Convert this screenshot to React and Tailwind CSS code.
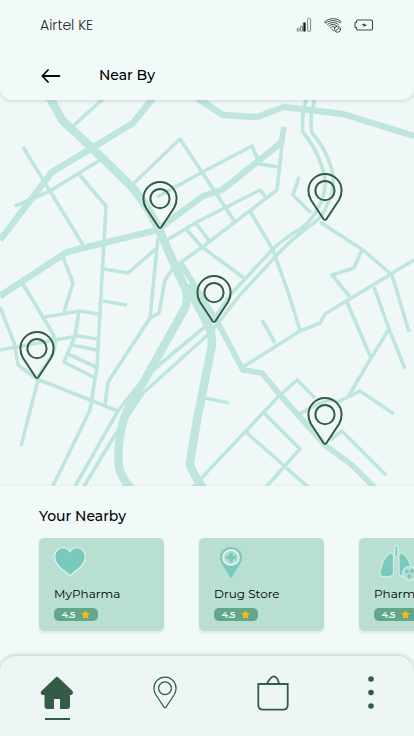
import React from "react";

const MAP_W = 414;
const MAP_H = 386;

const wideRoads = [
  "M49 96 62 120 92 148 132 187 Q150 209 160 232 L185 288 Q189 298 185 308 L143 383 Q127 408 123 422 Q117 445 119 467 Q121 478 132 490",
  "M187 285 207 323 Q214 335 211 350 L197 420 190 463 Q190 469 204 490",
];

const mainRoads = [
  "M0 240 52 172 92 148 133 123 153 98",
  "M0 296 67 252 157 230 203 196 222 190 282 142",
  "M197 98 223 115 257 117 284 107 343 114 414 136",
];

const mediumRoads = [
  "M180 262 218 323 243 370 262 373 280 395 325 445 352 465 375 488",
  "M284 127 281 145",
];

const streets = [
  "M72 127 103 99",
  "M23 147 83 245",
  "M15 206 50 191 100 160",
  "M78 173 106 206 101 295 97 367 90 410 52 488",
  "M104 269 128 273 158 247",
  "M63 257 73 283 64 312",
  "M23 284 53 334Q57 342 53 354L37 378",
  "M0 307 15 345 18 365 37 379 118 411",
  "M38 380 21 446",
  "M0 350 55 340 78 336 98 339",
  "M45 317 79 311 98 314",
  "M79 311 75 336 64 362 95 378",
  "M72 345 97 350",
  "M68 354 96 367",
  "M103 301 127 305",
  "M132 185 180 139 235 222",
  "M157 197 210 168 252 146 260 164 278 167",
  "M284 127 277 190 205 245 173 268 165 280 159 313 150 318 108 382 105 405",
  "M158 238 150 318",
  "M167 240 197 222 260 190 265 196",
  "M185 228 202 247 244 278",
  "M195 222 210 242",
  "M250 211 273 250 288 292 300 330",
  "M307 98 Q301 112 303 132 Q316 148 322 167 Q330 188 318 208 Q312 220 302 228 Q284 238 272 250 L232 293 213 320 153 370 132 393 118 411 74 488",
  "M315 98 Q309 118 312 133 Q326 149 331 167 Q337 187 327 205 Q323 216 315 222 Q290 240 275 257 L240 295 210 333 143 393 110 443 83 488",
  "M299 177 293 195 311 213",
  "M320 222 363 250 392 275 398 295 409 332",
  "M362 250 354 268 332 275 350 297",
  "M414 260 353 297 325 314 320 323 300 331 243 367",
  "M374 287 389 329 405 369",
  "M389 329 371 358 348 397",
  "M347 302 371 358",
  "M262 320 275 343",
  "M205 398 229 403",
  "M192 488 278 397 297 380 315 398",
  "M300 414 Q328 396 338 402 L360 391 394 414",
  "M330 440 342 431 386 475",
  "M264 413 300 449 265 488",
  "M246 432 309 488",
];

const pins = [
  { name: "Pharmacy near the junction", x: 160, y: 129 },
  { name: "Pharmacy on the east road", x: 325, y: 121 },
  { name: "Pharmacy in the centre", x: 214, y: 223 },
  { name: "Pharmacy on the west side", x: 37, y: 279 },
  { name: "Pharmacy to the south", x: 325, y: 345 },
];

function SignalIcon() {
  return (
    <svg width="16" height="16" viewBox="0 0 16 16" fill="none" stroke="#5b6463" strokeWidth="0.8" aria-hidden="true">
      <rect x="1.2" y="11.2" width="2" height="3" rx="0.6" />
      <rect x="4.5" y="9" width="2" height="5.2" rx="0.6" />
      <rect x="7.4" y="5.6" width="2" height="8.8" rx="0.6" fill="#111" />
      <rect x="11.6" y="1.4" width="3" height="13" rx="1" />
    </svg>
  );
}

function WifiIcon() {
  return (
    <svg width="18" height="16" viewBox="0 0 18 16" fill="none" stroke="#303837" strokeWidth="0.9" strokeLinecap="round" aria-hidden="true">
      <path d="M1 4.6C5.5 0.7 12.500 0.700 17 4.600L15.800 6C12 2.800 6 2.800 2.200 6Z" />
      <path d="M3.600 7.600C7 4.800 11 4.800 14.400 7.600M5 9C7.500 7 10.500 7 13 9" />
      <path d="M6.500 10.700C8 9.300 9.500 9.300 11 10.300M8 12.200 9.500 13.600" />
      <circle cx="13.500" cy="12.300" r="3" />
      <path d="M12 13.500 15 11.100" />
    </svg>
  );
}

function BatteryIcon() {
  return (
    <svg width="20" height="12" viewBox="0 0 20 12" fill="none" stroke="#424a49" strokeWidth="1.1" aria-hidden="true">
      <path d="M4 1H17Q18.500 1 18.500 2.500V9.500Q18.500 11 17 11H4Q2.500 11 2.500 9.500V8.500H1.500Q1 8.500 1 8V4Q1 3.500 1.500 3.500H2.500V2.500Q2.500 1 4 1Z" />
      <path d="M10.500 4.200 7.200 6.300H10L9.500 8 13.300 5.700H10.500Z" fill="#222" stroke="none" />
    </svg>
  );
}

function PinIcon({ className, strokeWidth }) {
  return (
    <svg viewBox="0 0 36 48" fill="none" stroke="#335b45" strokeWidth={strokeWidth} strokeLinejoin="round" className={className} aria-hidden="true">
      <path d="M18 1A16.600 16.600 0 0 0 1.400 17.600Q1.400 22.500 4 27L16.500 46Q18 48 19.500 46L32 27Q34.600 22.500 34.600 17.600A16.600 16.600 0 0 0 18 1Z" />
      <circle cx="18" cy="17.600" r="9.600" />
    </svg>
  );
}

function HeartIcon() {
  return (
    <svg width="32" height="30" viewBox="0 0 32 30" aria-hidden="true">
      <path d="M16 4.700C14.300 1.800 12 .700 9.500 .700C4.500 .700 .700 4.500 .700 9.500C.700 16 5 20 9.500 23.500Q13 26 16 29Q19 26 22.500 23.500C27 20 31.300 16 31.300 9.500C31.300 4.500 27.500 .700 22.500 .700C20 .700 17.700 1.800 16 4.700Z" fill="#7ac9bd" stroke="#e6f6f2" strokeWidth="1.100" />
    </svg>
  );
}

function StoreIcon() {
  return (
    <svg width="32" height="32" viewBox="0 0 32 32" className="ml-px" aria-hidden="true">
      <path d="M16 0C9.500 0 5 4.500 5 10.500C5 15 8 19 16 31.500C24 19 27 15 27 10.500C27 4.500 22.500 0 16 0Z" fill="#7ac9bd" />
      <ellipse cx="16" cy="10.500" rx="8.200" ry="7.500" fill="#b5ded5" stroke="#eef9f6" strokeWidth="1.300" />
      <path d="M14.200 5.800H17.800V8.800H21V12.200H17.800V15.200H14.200V12.200H11V8.800H14.200Z" fill="#7ac9bd" />
    </svg>
  );
}

function LungsIcon() {
  return (
    <svg width="40" height="36" viewBox="0 0 40 36" className="ml-1 max-w-none" aria-hidden="true">
      <g fill="#7ac9bd" stroke="#d3eee6" strokeWidth="1.200" strokeLinejoin="round">
        <path d="M17 0.600H19.800V12H17Z" />
        <path d="M13.500 8C10 8 6 14 4 20Q1.500 28 2.200 30Q2.800 31.800 6 31.800Q15.500 32 15.500 28V11Q15.500 8 13.500 8Z" />
        <path d="M23 8C26.500 8 30.500 14 32.500 20Q35 28 34.300 30Q33.700 31.800 30.500 31.800Q21 32 21 28V11Q21 8 23 8Z" />
        <circle cx="31.500" cy="28.500" r="7" fill="#b5ded5" />
      </g>
      <g fill="#7ac9bd">
        <circle cx="29" cy="26.500" r="1.900" />
        <circle cx="34" cy="26" r="1.900" />
        <circle cx="31.500" cy="31.500" r="1.900" />
      </g>
    </svg>
  );
}

function StarIcon() {
  return (
    <svg width="9" height="9" viewBox="0 0 24 24" fill="#fbbc16" aria-hidden="true">
      <path d="M12 0 15.500 8 24 9 17.800 14.700 19.500 23.500 12 19 4.500 23.500 6.200 14.700 0 9 8.500 8Z" />
    </svg>
  );
}

const stores = [
  { name: "MyPharma", rating: "4.5", icon: <HeartIcon />, pad: "pt-[9px]" },
  { name: "Drug Store", rating: "4.5", icon: <StoreIcon />, pad: "pt-[9px]" },
  { name: "Pharmacy", rating: "4.5", icon: <LungsIcon />, pad: "pt-[7px]" },
];

function StoreCard({ store }) {
  return (
    <li className="h-[93px] w-[125px] shrink-0 rounded-[5px] bg-[#b9dfd2] px-[15px] shadow-[0_2px_3px_rgba(0,0,0,0.08)]">
      <div className={`h-12 ${store.pad}`}>{store.icon}</div>
      <h3 className="whitespace-nowrap text-xs leading-4 text-black">{store.name}</h3>
      <p className="mt-[6px] flex h-[13px] w-11 items-center justify-center gap-[6px] rounded-[5px] bg-[#62a68c] text-[9px] font-semibold leading-none text-white">
        {store.rating}
        <StarIcon />
      </p>
    </li>
  );
}

export default function App() {
  return (
    <div className="flex min-h-screen flex-col bg-[#eff8f7] font-['Montserrat','Inter',sans-serif]">
      <header className="relative z-10 h-[100px] rounded-b-xl bg-[#f1faf9] px-10 shadow-[0_1px_4px_rgba(0,0,0,0.14)]">
        <div className="flex h-[50px] items-center justify-between">
          <span className="font-['Poppins','Inter',sans-serif] text-sm font-light text-[#1f2927]">Airtel KE</span>
          <div className="flex items-center gap-3">
            <SignalIcon />
            <WifiIcon />
            <BatteryIcon />
          </div>
        </div>
        <div className="flex h-[50px] items-center gap-9">
          <button type="button" aria-label="Back" className="flex h-6 w-[23px] items-center">
            <svg width="21" height="16" viewBox="0 0 21 16" fill="none" stroke="#050a08" strokeWidth="1.800" strokeLinecap="round" strokeLinejoin="round" aria-hidden="true">
              <path d="M19.500 9H2.500M8 3 2.300 9 8 15" />
            </svg>
          </button>
          <h1 className="text-sm font-medium text-black">Near By</h1>
        </div>
      </header>

      <main className="flex flex-1 flex-col">
        <section aria-label="Map" className="relative min-h-[386px] flex-1 overflow-hidden">
          <svg viewBox="0 100 414 386" preserveAspectRatio="none" className="absolute inset-0 h-full w-full" fill="none" stroke="#bfe6de" strokeLinejoin="round" aria-hidden="true">
            <g strokeWidth="8.500">{wideRoads.map((d) => <path key={d} d={d} />)}</g>
            <g strokeWidth="6.500">{mainRoads.map((d) => <path key={d} d={d} />)}</g>
            <g strokeWidth="5.800">{mediumRoads.map((d) => <path key={d} d={d} />)}</g>
            <g strokeWidth="3.600">{streets.map((d) => <path key={d} d={d} />)}</g>
          </svg>
          {pins.map((pin) => (
            <button
              key={pin.name}
              type="button"
              aria-label={pin.name}
              className="absolute -translate-x-1/2 -translate-y-full"
              style={{ left: `${(pin.x / MAP_W) * 100}%`, top: `${(pin.y / MAP_H) * 100}%` }}
            >
              <PinIcon className="block h-12 w-9" strokeWidth="2" />
            </button>
          ))}
        </section>

        <section className="relative bg-[#f1faf9] pb-[21px] pt-5 shadow-[0_-1px_3px_rgba(0,0,0,0.04)]">
          <svg viewBox="0 0 414 170" preserveAspectRatio="none" className="absolute inset-0 h-full w-full" fill="none" stroke="#eff9f6" strokeWidth="4" aria-hidden="true">
            <path d="M125 0 165 50M204 0 228 52M265 0 230 38M309 0 360 48M375 0 290 68" />
          </svg>
          <h2 className="relative px-[39px] text-sm font-medium text-black">Your Nearby</h2>
          <ul className="relative flex gap-[35px] overflow-x-auto px-[39px] pb-1 pt-3 [scrollbar-width:none]">
            {stores.map((store) => <StoreCard key={store.name} store={store} />)}
          </ul>
        </section>
      </main>

      <nav aria-label="Main" className="relative bg-[#f1faf9]">
        <div className="flex h-20 items-start justify-between rounded-t-2xl bg-[#edf6f5] px-10 pt-5 shadow-[0_-1px_4px_rgba(0,0,0,0.2)]">
          <a href="#home" aria-label="Home" aria-current="page" className="flex flex-col items-center gap-[9px]">
            <svg width="34" height="33" viewBox="0 0 34 33" fill="#335b45" aria-hidden="true">
              <path d="M15.600 1.400Q17 .300 18.400 1.400L32 14.500Q34 17 32 18.500Q31.500 19 30 19V30Q30 33 27 33H20V23H14V33H7.500Q4.500 33 4.500 30V19H3Q0 18.500 1 15.500Z" />
            </svg>
            <span className="h-0.5 w-[25px] bg-[#335b45]" />
          </a>
          <a href="#map" aria-label="Nearby map">
            <PinIcon className="block h-[33px] w-6" strokeWidth="1.800" />
          </a>
          <a href="#bag" aria-label="Bag">
            <svg width="32" height="36" viewBox="0 0 32 36" fill="none" stroke="#335b45" strokeWidth="1.800" className="-mt-px" aria-hidden="true">
              <path d="M1.300 9H30.700V30Q30.700 34.700 26 34.700H6Q1.300 34.700 1.300 30Z" />
              <path d="M10 8.500C12.500 4 14.500 1.300 16.500 1.300C19 1.300 21 4 22 8.500" />
            </svg>
          </a>
          <button type="button" aria-label="More">
            <svg width="6" height="34" viewBox="0 0 6 34" fill="#335b45" aria-hidden="true">
              <circle cx="3" cy="3" r="2.800" />
              <circle cx="3" cy="16.500" r="2.800" />
              <circle cx="3" cy="30" r="2.800" />
            </svg>
          </button>
        </div>
      </nav>
    </div>
  );
}
